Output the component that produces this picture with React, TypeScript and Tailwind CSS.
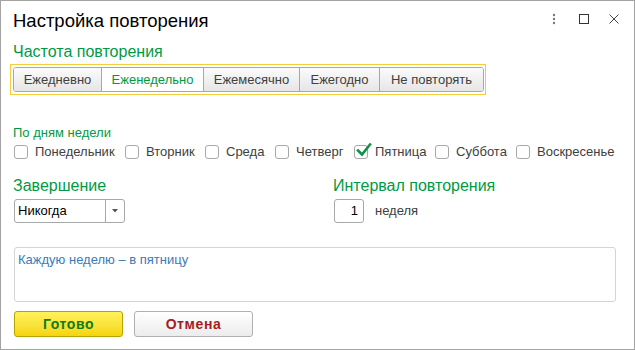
import React from "react";

const F = { fontFamily: "Arial, 'Liberation Sans', sans-serif" };

function Check({ checked, label }: { checked?: boolean; label: string }) {
  return (
    <div className="flex items-center h-[14px]">
      <div className="relative w-[14px] h-[14px] shrink-0 rounded-[3px] border border-[#a8a8a8] bg-white">
        {checked && (
          <svg className="absolute left-[1px] top-[-4px]" width="16" height="16" viewBox="0 0 16 16">
            <path d="M2 8.5 L6 12.5 L14 2.5" fill="none" stroke="#11904a" strokeWidth="2.6" strokeLinecap="square" />
          </svg>
        )}
      </div>
      <span className="ml-[7px] text-[13px] leading-[14px] text-[#404040] whitespace-nowrap">{label}</span>
    </div>
  );
}

export default function App() {
  const tabs = ["Ежедневно", "Еженедельно", "Ежемесячно", "Ежегодно", "Не повторять"];
  const widths = ["w-[87px]", "w-[102px]", "w-[96px]", "w-[80px]", "w-[104px]"];
  return (
    <div style={F} className="w-[635px] h-[350px] bg-white border border-[#a3a3a3] relative overflow-hidden">
      <div className="flex items-center justify-between pl-[12px] pr-[15px] h-[36px]">
        <div className="text-[18.5px] text-black leading-none mt-[4px]">Настройка повторения</div>
        <div className="flex items-center">
          <svg width="4" height="12" viewBox="0 0 4 12">
            <circle cx="2" cy="2" r="1.2" fill="#777" />
            <circle cx="2" cy="6" r="1.2" fill="#777" />
            <circle cx="2" cy="10" r="1.2" fill="#777" />
          </svg>
          <svg className="ml-[23px]" width="10" height="10" viewBox="0 0 10 10">
            <rect x="0.5" y="0.5" width="9" height="9" fill="none" stroke="#333" strokeWidth="1" />
          </svg>
          <svg className="ml-[20px]" width="10" height="10" viewBox="0 0 10 10">
            <path d="M0.5 0.5 L9.5 9.5 M9.5 0.5 L0.5 9.5" stroke="#444" strokeWidth="1" />
          </svg>
        </div>
      </div>

      <div className="pl-[12px] pr-[20px]">
        <div className="text-[16px] text-[#009a45] leading-[18px] mt-[6px]">Частота повторения</div>
        <div className="mt-[3px] ml-[-3px] w-[476px] h-[31px] border border-[#f2cd3c] flex items-center pl-[2px]">
          <div className="flex h-[25px] rounded-[3px] border border-[#a8a8a8] overflow-hidden">
            {tabs.map((t, i) => (
              <div
                key={t}
                className={`${widths[i]} flex items-center justify-center text-[13px] ${i > 0 ? "border-l border-[#a8a8a8]" : ""} ${
                  i === 1 ? "bg-white text-[#009a45]" : "bg-gradient-to-b from-[#fbfbfb] to-[#e6e6e6] text-[#404040]"
                }`}
              >
                {t}
              </div>
            ))}
          </div>
        </div>

        <div className="mt-[30px] text-[13px] text-[#009a45] leading-[15px]">По дням недели</div>
        <div className="flex items-center mt-[5px] ml-[1px]">
          <div className="w-[111px] shrink-0"><Check label="Понедельник" /></div>
          <div className="w-[80px] shrink-0"><Check label="Вторник" /></div>
          <div className="w-[70px] shrink-0"><Check label="Среда" /></div>
          <div className="w-[79px] shrink-0"><Check label="Четверг" /></div>
          <div className="w-[81px] shrink-0"><Check checked label="Пятница" /></div>
          <div className="w-[81px] shrink-0"><Check label="Суббота" /></div>
          <div className="shrink-0"><Check label="Воскресенье" /></div>
        </div>

        <div className="flex mt-[18px]">
          <div className="w-[320px]">
            <div className="text-[16px] text-[#009a45] leading-[18px]">Завершение</div>
            <div className="mt-[4px] ml-[1px] w-[111px] h-[24px] rounded-[3px] border border-[#a8a8a8] flex">
              <div className="flex-1 text-[13px] text-black pl-[3px] flex items-center">Никогда</div>
              <div className="w-[19px] border-l border-[#a8a8a8] flex items-center justify-center">
                <svg width="6" height="4" viewBox="0 0 6 4"><path d="M0 0 H6 L3 3.5 Z" fill="#555" /></svg>
              </div>
            </div>
          </div>
          <div>
            <div className="text-[16px] text-[#009a45] leading-[18px]">Интервал повторения</div>
            <div className="flex items-center mt-[4px]">
              <div className="ml-[1px] w-[30px] h-[24px] rounded-[3px] border border-[#a8a8a8] flex items-center justify-end pr-[5px] text-[13px] text-black">1</div>
              <span className="ml-[11px] text-[13px] text-[#404040]">неделя</span>
            </div>
          </div>
        </div>

        <div className="mt-[24px] ml-[1px] w-[602px] h-[55px] rounded-[3px] border border-[#d4d4d4] px-[3px] pt-[2px] text-[13px] text-[#3d7ab8]">
          Каждую неделю – в пятницу
        </div>

        <div className="flex mt-[9px] ml-[1px] gap-[11px]">
          <div className="w-[109px] h-[26px] rounded-[3px] border border-[#b8a300] bg-gradient-to-b from-[#fff25a] to-[#f5d500] flex items-center justify-center text-[14px] tracking-[0.6px] font-bold text-[#0e7d12]">Готово</div>
          <div className="w-[119px] h-[26px] rounded-[3px] border border-[#b0b0b0] bg-gradient-to-b from-white to-[#ececec] flex items-center justify-center text-[14px] tracking-[0.6px] font-bold text-[#a51d1d]">Отмена</div>
        </div>
      </div>
    </div>
  );
}
